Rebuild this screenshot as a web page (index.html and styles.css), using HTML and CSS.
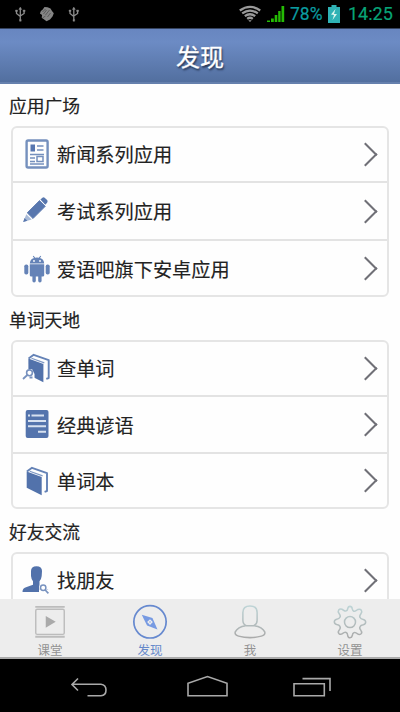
FILE: index.html
```html
<!DOCTYPE html>
<html lang="zh-CN">
<head>
<meta charset="utf-8">
<title>发现</title>
<link rel="stylesheet" href="styles.css">
</head>
<body>
<div class="phone">
  <div class="status">
    <svg class="status-left" width="70" height="28" viewBox="0 0 70 28" fill="none" stroke="#8c8c8c" stroke-width="1.3">
      <g id="usb">
        <path d="M10.3 8v12M6.5 11v2.5l3.8 3M14.1 10.5v3l-3.8 2.5"/>
        <path d="M8.8 9.5l1.5-2.5 1.5 2.5zM5.5 10h2v1.5h-2zM13.1 10h2v1.5h-2zM9.5 19.5h1.7v1.7H9.5z" fill="#8c8c8c" stroke-width=".4"/>
      </g>
      <g transform="translate(-10.5 0)">
        <path d="M45 7l3 .3 3 1.2 1.5 2.5 1.8 2.2-1.3 3.3-2.5 3-3.5 1.8-2-1.5-2.8-2 .4-2.7-2.2-1.5 1-2.6 1.6-1.2z" fill="#858585" stroke="none"/>
        <path d="M43 12l3-3M44 14l3-4M46 15l4-5M48 17l3-4M43 18l3-2" stroke="#505050" stroke-width=".8"/>
      </g>
      <use href="#usb" x="53.5"/>
    </svg>
    <svg class="wifi" width="24" height="18" viewBox="0 0 24 18" fill="none" stroke="#999" stroke-width="2.3">
      <path d="M1.8 5.5Q12-1.8 22.2 5.5M4.2 8.4Q12 2.8 19.8 8.4M6.8 11.2Q12 7.3 17.2 11.2M9.2 13.8Q12 11.7 14.8 13.8"/>
      <path d="M10.3 15.2h3.4L12 17z" fill="#999" stroke="none"/>
    </svg>
    <svg class="signal" width="19" height="18" viewBox="0 0 19 18" fill="#25bb04">
      <path d="M1 15.5h3V17H1zM5 13.5h2.8V17H5zM8.7 10h2.6v7H8.7zM12.2 6h2.4v11h-2.4zM15.5 1h2.7v16h-2.7z"/>
    </svg>
    <span class="percent">78%</span>
    <svg class="battery" width="12" height="18" viewBox="0 0 12 18">
      <path d="M3.5 0h5v2H12v16H0V2h3.5z" fill="#2fb2b5"/>
      <path d="M7.5 4L3 9.5l3 .5-1.5 5L9 9H6z" fill="#d8f5ee"/>
    </svg>
    <span class="clock">14:25</span>
  </div>

  <header class="header">发现</header>

  <main class="content">
    <h2 class="section">应用广场</h2>
    <div class="card card-apps">
      <div class="row">
        <svg class="icon icon-high" viewBox="0 0 30 30" fill="none" stroke="#7590bd">
          <rect x="4.6" y="1.5" width="21" height="27" rx="1.5" stroke-width="2.4"/>
          <path d="M8.5 5.5h4.5v7H8.5z" fill="#5877b0" stroke="none"/>
          <path d="M15 7h6.5M15 11h6.5M8 15.5h14M8 19h5M8 22.5h5M8 25h14" stroke-width="1.5"/>
          <path d="M15 17.5h6v5h-6z" stroke-width="1.5"/>
        </svg>
        <span>新闻系列应用</span><i class="arrow"></i>
      </div>
      <div class="row row-mid">
        <svg class="icon icon-high" viewBox="0 0 30 30">
          <path d="M5.2 17.8L17.5 5.5l5.8 5.8L11 23.6z" fill="#5877ae" stroke="#5877ae" stroke-width=".8"/>
          <path d="M18.4 4.6l2-1.8q1.3-1 2.5.1l2.2 2.2q1.1 1.3 0 2.6l-1.8 2.1z" fill="#5877ae"/>
          <path d="M4.3 19.2l5.4 5.2L1.2 27z" fill="#a9bbd8"/>
          <path d="M1.2 27l1.3-4 2.8 2.8z" fill="#5877ae"/>
        </svg>
        <span>考试系列应用</span><i class="arrow"></i>
      </div>
      <div class="row row-last">
        <svg class="icon icon-low" viewBox="0 0 30 30" fill="#6583b7">
          <path d="M7.8 8.5Q8.2 4 12 3.1L10.8 1.3l.8-.5 1.6 2q1.8-.4 3.6 0l1.6-2 .8.5L18 3.1q3.8 1 4.2 5.4zM7.8 9.3h14.4v10.9q0 1.4-1.4 1.4H9.2q-1.4 0-1.4-1.4z"/>
          <rect x="2.3" y="9.5" width="4" height="10" rx="1.8"/>
          <rect x="23.7" y="9.5" width="4" height="10" rx="1.8"/>
          <rect x="10.4" y="19" width="3.4" height="8.5" rx="1.7"/>
          <rect x="16.2" y="19" width="3.4" height="8.5" rx="1.7"/>
          <circle cx="12" cy="6" r=".9" fill="#fff"/><circle cx="18" cy="6" r=".9" fill="#fff"/>
        </svg>
        <span>爱语吧旗下安卓应用</span><i class="arrow"></i>
      </div>
    </div>

    <h2 class="section section-words">单词天地</h2>
    <div class="card card-words">
      <div class="row">
        <svg class="icon icon-high" viewBox="0 0 30 30">
          <g id="book" transform="translate(1.7 0)">
            <path d="M4.7 5.6L19.7 11v18.3L4.7 21.8z" fill="#5272ab"/>
            <path d="M4.9 5.6L10 1.8l15 5.3V25l-2.4.8" fill="none" stroke="#6482b6" stroke-width="1.9" stroke-linejoin="round"/>
            <path d="M7.8 5.3l12.8 4.6" stroke="#7e98c4" stroke-width="1.2"/>
          </g>
          <path d="M0 16h10l2.5 5v5H0z" fill="#fff"/>
          <circle cx="7.5" cy="19.8" r="2.9" fill="#fff" stroke="#7892bf" stroke-width="1.6"/>
          <path d="M5.3 22L1 26M7.5 24.5h3" fill="none" stroke="#7892bf" stroke-width="1.8"/>
        </svg>
        <span>查单词</span><i class="arrow"></i>
      </div>
      <div class="row row-mid">
        <svg class="icon icon-high" viewBox="0 0 30 30">
          <rect x="3.7" y="1" width="22.8" height="28" rx="2" fill="#5474ad"/>
          <path d="M6 6.5h2M9.5 6.5H22M6 12h18M6 17.3h18M16 22.7h8" stroke="#d7e1f0" stroke-width="2"/>
        </svg>
        <span>经典谚语</span><i class="arrow"></i>
      </div>
      <div class="row row-last">
        <svg class="icon" viewBox="0 0 30 30">
          <use href="#book" x="-1.7"/>
        </svg>
        <span>单词本</span><i class="arrow"></i>
      </div>
    </div>

    <h2 class="section section-friends">好友交流</h2>
    <div class="card card-friends">
      <div class="row">
        <svg class="icon icon-high" viewBox="0 0 30 30">
          <path d="M9 6q0-4.8 5.5-4.8T20 6l-.3 5q-.5 4-2.2 5.2v4l9.5 5V27H.5q-.2-3.8 4.2-5l6.3-2.3v-3.5Q9.4 14.8 9 11z" fill="#5272ab"/>
          <circle cx="21" cy="22.5" r="4" fill="#fff"/>
          <path d="M17 24.5h10.5V29H17z" fill="#fff"/>
          <circle cx="21.2" cy="22.8" r="2.7" fill="#fff" stroke="#7892bf" stroke-width="1.5"/>
          <path d="M23.2 25l3.2 3.3" stroke="#7892bf" stroke-width="1.7"/>
        </svg>
        <span>找朋友</span><i class="arrow"></i>
      </div>
    </div>
  </main>

  <nav class="tabs">
    <div class="tab">
      <svg viewBox="0 0 40 40" fill="none" stroke="#bcbcbc" stroke-width="1.5">
        <path d="M4.5 3h31M4.5 34.5h31" stroke-width="2"/>
        <rect x="5" y="5.5" width="30" height="26.5" rx="1.5"/>
        <path d="M15.5 12.5l10.5 6.3-10.5 6.3z" fill="#aaa" stroke="none"/>
      </svg>
      <span>课堂</span>
    </div>
    <div class="tab active">
      <svg viewBox="0 0 40 40" fill="none" stroke="#6689cf" stroke-width="1.8">
        <circle cx="20" cy="18.8" r="17"/>
        <path d="M11.3 11.3l11.3 3.5 5.3 12-11-4.2z" fill="#779ae2" stroke="none"/>
        <path d="M20 16l3 3-3 3-3-3z" fill="#eee" stroke="none"/>
        <circle cx="20" cy="19" r=".8" fill="#779ae2" stroke="none"/>
      </svg>
      <span>发现</span>
    </div>
    <div class="tab">
      <svg viewBox="0 0 40 40" fill="none" stroke="url(#grey)" stroke-width="1.6">
        <defs><linearGradient id="grey" x1="0" y1="2" x2="0" y2="36" gradientUnits="userSpaceOnUse"><stop stop-color="#bed4d6"/><stop offset="1" stop-color="#aaa"/></linearGradient></defs>
        <path d="M12.5 9q0-7 7.5-7t7.5 7v8q0 4-3.5 5.8h-8q-3.5-1.8-3.5-5.8z"/>
        <path d="M15.5 22.8q-8.5 1.2-11 6.5-1 3.2 3.5 4.5 12 3.2 24 0 4.5-1.3 3.5-4.5-2.5-5.3-11-6.5"/>
      </svg>
      <span>我</span>
    </div>
    <div class="tab">
      <svg viewBox="0 0 40 40" fill="none" stroke="url(#grey)" stroke-width="1.6">
        <circle cx="20" cy="19" r="5.8"/>
        <path d="M20 2.5q2 0 2.4 2.7.7 3 3 2.3 1.4-.6 2.8-1.7 2.4-1 3.7.7 1.2 1.8-.4 3.7-2 2.6-.9 4 .7 1.6 3.4 2 2.5.6 2.5 2.8t-2.5 2.8q-2.7.4-3.4 2-1.1 1.4.9 4 1.6 1.9.2 3.5-1.8 1.4-3.7.1-2.4-2-4-1.2-1.4.6-1.6 3.2Q22 35.5 20 35.5t-2.4-2.3q-.2-2.6-1.6-3.2-1.6-.8-4 1.2-1.9 1.3-3.7-.1-1.4-1.6.2-3.5 2-2.6.9-4-.7-1.6-3.4-2-2.5-.6-2.5-2.8t2.5-2.8q2.7-.4 3.4-2 1.1-1.4-.9-4-1.6-1.9-.4-3.7 1.3-1.7 3.7-.7 1.4 1.1 2.8 1.7 2.3.7 3-2.3Q18 2.5 20 2.5z"/>
      </svg>
      <span>设置</span>
    </div>
  </nav>

  <div class="navbar">
    <svg width="400" height="53" viewBox="0 0 400 53" fill="none" stroke="#a9a9a9" stroke-width="1.6">
      <path d="M78 19.5l-6 6 6 6M72 25.3h29q5 .5 5 5.8 0 5.4-5 5.7H87.5"/>
      <path d="M188 36.7V24.2l19.5-6.7 19.5 6.7v12.5z"/>
      <path d="M294 24.8h30.3v12H294zM302.5 19.6H330V32"/>
    </svg>
  </div>
</div>
</body>
</html>
```
FILE: styles.css
```css
* {
  box-sizing: border-box;
}

body {
  margin: 0;
  background: #000;
  font-family: Roboto, "Noto Sans CJK SC", sans-serif;
}

.phone {
  display: flex;
  flex-direction: column;
  width: 400px;
  height: 712px;
  overflow: hidden;
  background: #fefefe;
}

.status {
  display: flex;
  flex: none;
  align-items: center;
  height: 28px;
  padding-left: 10px;
  background: #000;
  font-size: 18px;
  line-height: 28px;
  white-space: nowrap;
}

.status svg {
  flex: none;
}

.wifi {
  margin-left: 158px;
}

.signal {
  margin-left: 4px;
}

.percent {
  width: 33px;
  margin-left: 5px;
  color: #0b9ca0;
  font-size: 17.5px;
  -webkit-text-stroke: 0.2px;
}

.battery {
  margin-left: 5px;
}

.clock {
  margin-left: 8px;
  color: #08a477;
  -webkit-text-stroke: 0.2px;
}

.header {
  flex: none;
  height: 56px;
  padding-top: 2px;
  border-top: 1px solid #35435f;
  border-bottom: 2px solid #6580ad;
  background: linear-gradient(#6886c0, #6c8bc4 25%, #526f9f);
  color: #fff;
  font-size: 24px;
  line-height: 54px;
  text-align: center;
  text-shadow: 1px 2px 2px #24334f;
  -webkit-text-stroke: 0.3px;
}

.content {
  flex: none;
  height: 515px;
  padding: 0 11px;
  overflow: hidden;
}

.section {
  height: 42px;
  margin: 0 0 0 -2px;
  padding-top: 2px;
  color: #222;
  font-size: 17.8px;
  font-weight: 400;
  line-height: 42px;
  -webkit-text-stroke: 0.2px;
}

.section-words,
.section-friends {
  height: 43px;
  padding-top: 3px;
}

.card {
  display: grid;
  width: 378px;
  border: 2px solid #e5e5e5;
  border-radius: 6px;
  background: #fefefe;
}

.card-apps {
  height: 171px;
  grid-template-rows: 55px 58px 54px;
}

.card-words {
  height: 169px;
  grid-template-rows: 55px 57px 53px;
}

.card-friends {
  height: 171px;
  grid-template-rows: 55px 58px 54px;
}

.row {
  display: flex;
  align-items: center;
  padding: 0 13px 0 9px;
  border-bottom: 2px solid #e3e3e3;
  color: #222;
  font-size: 19.2px;
  -webkit-text-stroke: 0.15px;
}

.row span {
  padding-bottom: 2px;
}

.row-mid span {
  padding-bottom: 0;
}

.row-last {
  border-bottom: 0;
}

.row-last span {
  padding: 1px 0 0;
}

.icon {
  width: 30px;
  height: 30px;
  flex: none;
  margin-right: 5px;
}

.icon-high {
  margin-bottom: 2px;
}

.icon-low {
  margin-top: 3px;
}

.arrow {
  width: 17px;
  height: 17px;
  margin-left: auto;
  border: solid #707077;
  border-width: 2px 2px 0 0;
  transform: rotate(45deg);
}

.tabs {
  display: grid;
  grid-template-columns: repeat(4, 1fr);
  flex: none;
  height: 60px;
  padding-top: 5px;
  border-bottom: 2px solid #aaa;
  background: #ededed;
}

.tab {
  display: flex;
  flex-direction: column;
  align-items: center;
  color: #929292;
  font-size: 12.5px;
  line-height: 18px;
}

.tab svg {
  flex: none;
  width: 40px;
  height: 38px;
}

.active {
  color: #6689ca;
}

.navbar {
  flex: none;
  height: 53px;
  background: #000;
}

.navbar svg {
  display: block;
}
```
